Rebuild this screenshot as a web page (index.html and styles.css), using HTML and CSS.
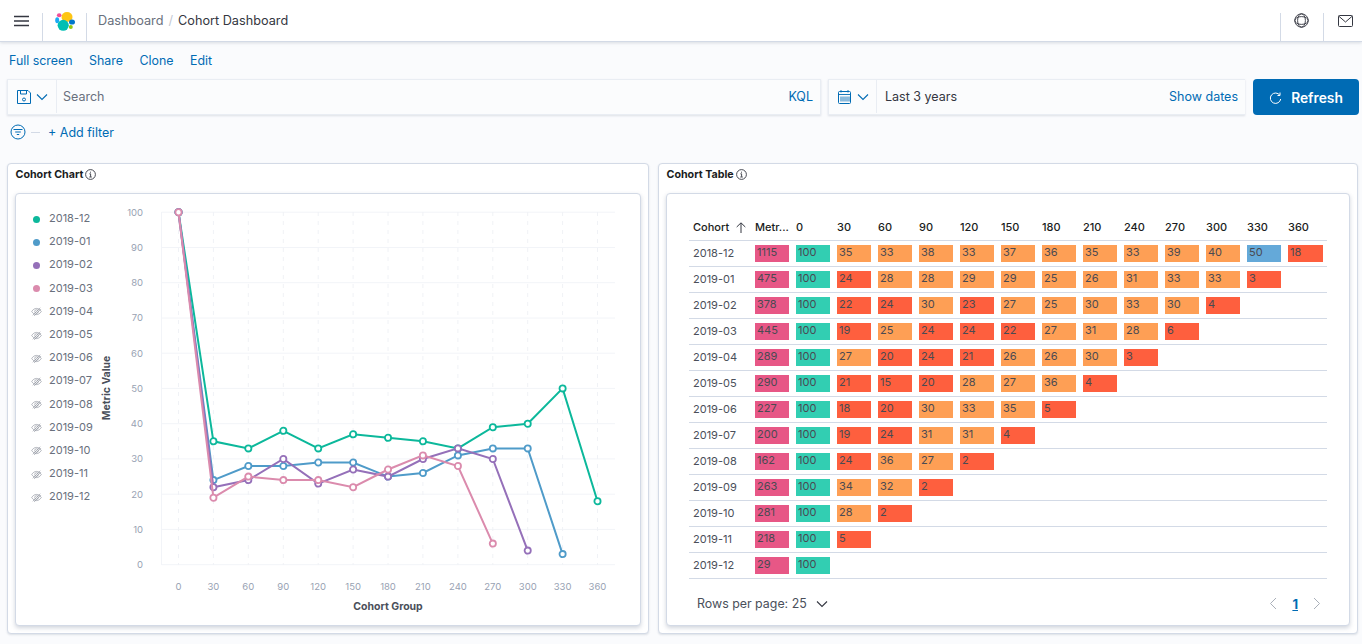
FILE: index.html
```html
<!DOCTYPE html>
<html lang="en">
<head>
<meta charset="utf-8">
<title>Cohort Dashboard</title>
<link rel="stylesheet" href="styles.css">
</head>
<body>
<svg class="defs" width="0" height="0" aria-hidden="true">
  <defs>
    <symbol id="eye-off" viewBox="0 0 16 16">
      <path d="M1 8c2-3 4.300-4.500 7-4.500S13 5 15 8c-2 3-4.300 4.500-7 4.500S3 11 1 8z" fill="none" stroke="#8a8f9a" stroke-width=".9"/>
      <circle cx="8" cy="8" r="2.600" fill="none" stroke="#8a8f9a" stroke-width=".9"/>
      <path d="M2.500 13.500 13.500 2.500M4.500 14.500 14.500 4.500" stroke="#8a8f9a" stroke-width=".9"/>
    </symbol>
    <symbol id="chev" viewBox="0 0 12 8">
      <path d="M1 1.500 6 6.500l5-5" fill="none" stroke="currentColor" stroke-width="1.100"/>
    </symbol>
    <marker id="m-teal" viewBox="0 0 10 10" refX="5" refY="5" markerWidth="10" markerHeight="10" markerUnits="userSpaceOnUse"><circle cx="5" cy="5" r="3.100" fill="#fff" stroke="#0cb89b" stroke-width="1.800"/></marker>
    <marker id="m-blue" viewBox="0 0 10 10" refX="5" refY="5" markerWidth="10" markerHeight="10" markerUnits="userSpaceOnUse"><circle cx="5" cy="5" r="3.100" fill="#fff" stroke="#4f9bc9" stroke-width="1.800"/></marker>
    <marker id="m-purple" viewBox="0 0 10 10" refX="5" refY="5" markerWidth="10" markerHeight="10" markerUnits="userSpaceOnUse"><circle cx="5" cy="5" r="3.100" fill="#fff" stroke="#9570b9" stroke-width="1.800"/></marker>
    <marker id="m-pink" viewBox="0 0 10 10" refX="5" refY="5" markerWidth="10" markerHeight="10" markerUnits="userSpaceOnUse"><circle cx="5" cy="5" r="3.100" fill="#fff" stroke="#db8bad" stroke-width="1.800"/></marker>
  </defs>
</svg>

<header class="topbar">
  <div class="nav-cell menu-cell">
    <svg width="15" height="14" viewBox="0 0 15 14"><path d="M0 2.500h15M0 7h15M0 11.500h15" stroke="#343741" stroke-width="1.500"/></svg>
  </div>
  <div class="nav-cell logo-cell">
    <svg width="24" height="24" viewBox="0 0 24 24">
      <ellipse cx="14" cy="8" rx="5.500" ry="5" fill="#fec514"/>
      <ellipse cx="6.200" cy="6.200" rx="2.300" ry="2" fill="#f04e98"/>
      <ellipse cx="4.200" cy="11.200" rx="2" ry="3" fill="#1ba9f5"/>
      <ellipse cx="19" cy="13" rx="3" ry="2.600" fill="#0077cc"/>
      <ellipse cx="17.800" cy="18" rx="2" ry="1.900" fill="#93c90e"/>
      <ellipse cx="10.200" cy="16.300" rx="5.600" ry="5.500" fill="#00bfb3"/>
    </svg>
  </div>
  <nav class="crumbs"><a class="crumb-link">Dashboard</a><span class="crumb-sep">/</span><span class="crumb-now">Cohort Dashboard</span></nav>
  <div class="nav-cell help-cell">
    <svg width="15" height="15" viewBox="0 0 15 15" fill="none" stroke="#343741" stroke-width=".9"><circle cx="7.500" cy="7.500" r="6.700"/><ellipse cx="7.500" cy="7.500" rx="3.900" ry="6.700"/><ellipse cx="7.500" cy="7.500" rx="6.700" ry="3.900"/></svg>
  </div>
  <div class="nav-cell mail-cell">
    <svg width="15" height="12" viewBox="0 0 15 12" fill="none" stroke="#343741" stroke-width="1"><rect x=".5" y=".5" width="14" height="11" rx="1"/><path d="M.8 1.200 7.500 7l6.700-5.800"/></svg>
  </div>
</header>

<nav class="actions"><a>Full screen</a><a>Share</a><a>Clone</a><a>Edit</a></nav>

<section class="query">
  <div class="search-box">
    <div class="addon save-addon">
      <svg width="14" height="14" viewBox="0 0 14 14" fill="none" stroke="#006bb4" stroke-width="1"><path d="M.5.500h10.500l2.500 2.500v10.500H.5z"/><path d="M3.500.500v3.500h6V.5"/><circle cx="7" cy="9.500" r="1.500"/></svg>
      <svg class="chev-blue" width="12" height="8"><use href="#chev"/></svg>
    </div>
    <span class="placeholder">Search</span>
    <a class="kql">KQL</a>
  </div>
  <div class="date-box">
    <div class="addon date-addon">
      <svg width="13" height="14" viewBox="0 0 13 14" fill="none" stroke="#006bb4" stroke-width="1"><rect x=".5" y="1.500" width="12" height="12" rx="1"/><path d="M.5 4.500h12M3 0v2.500M10 0v2.500M3 6.500v5M5 6.500v5M7 6.500v5M9 6.500v5M11 6.500v5" stroke-width=".9"/></svg>
      <svg class="chev-blue" width="12" height="8"><use href="#chev"/></svg>
    </div>
    <span class="date-text">Last 3 years</span>
    <a class="show-dates">Show dates</a>
  </div>
  <button class="refresh">
    <svg width="13" height="13" viewBox="0 0 13 13" fill="none" stroke="#fff" stroke-width="1"><path d="M10.800 3.200A5.200 5.200 0 1 0 11.700 7"/><path d="M11 .5v3H8.500"/></svg>
    <span>Refresh</span>
  </button>
</section>

<div class="filters">
  <svg width="16" height="16" viewBox="0 0 16 16" fill="none" stroke="#006bb4" stroke-width="1"><circle cx="8" cy="8" r="7"/><path d="M3.500 5.500h9M5.200 8h5.600M6.800 10.500h2.400"/></svg>
  <span class="filter-dash"></span>
  <a class="add-filter">+ Add filter</a>
</div>

<main class="panels">
  <section class="panel">
    <h2 class="panel-title">Cohort Chart<svg class="info" width="11" height="11" viewBox="0 0 11 11" fill="none" stroke="#343741" stroke-width=".9"><circle cx="5.500" cy="5.500" r="4.900"/><path d="M4.400 4.800h1.200v3M4.300 8h2.500M5.500 2.700v1"/></svg></h2>
    <div class="inner chart-inner">
      <ul class="legend">
        <li><i class="dot c-teal"></i>2018-12</li>
        <li><i class="dot c-blue"></i>2019-01</li>
        <li><i class="dot c-purple"></i>2019-02</li>
        <li><i class="dot c-pink"></i>2019-03</li>
        <li><svg class="eye" width="11" height="11"><use href="#eye-off"/></svg>2019-04</li>
        <li><svg class="eye" width="11" height="11"><use href="#eye-off"/></svg>2019-05</li>
        <li><svg class="eye" width="11" height="11"><use href="#eye-off"/></svg>2019-06</li>
        <li><svg class="eye" width="11" height="11"><use href="#eye-off"/></svg>2019-07</li>
        <li><svg class="eye" width="11" height="11"><use href="#eye-off"/></svg>2019-08</li>
        <li><svg class="eye" width="11" height="11"><use href="#eye-off"/></svg>2019-09</li>
        <li><svg class="eye" width="11" height="11"><use href="#eye-off"/></svg>2019-10</li>
        <li><svg class="eye" width="11" height="11"><use href="#eye-off"/></svg>2019-11</li>
        <li><svg class="eye" width="11" height="11"><use href="#eye-off"/></svg>2019-12</li>
      </ul>
      <svg class="plot" width="530" height="420" viewBox="96 200 530 420">
        <g class="grid-h">
          <path d="M161.500 212.200H615M161.500 247.500H615M161.500 282.700H615M161.500 318H615M161.500 353.200H615M161.500 388.400H615M161.500 423.700H615M161.500 458.900H615M161.500 494.200H615M161.500 529.400H615M161.500 564.700H615M161.500 212V565"/>
        </g>
        <g class="grid-v">
          <path d="M178.500 212V565M213.400 212V565M248.300 212V565M283.300 212V565M318.200 212V565M353.100 212V565M388 212V565M422.900 212V565M457.900 212V565M492.800 212V565M527.700 212V565M562.600 212V565M597.500 212V565"/>
        </g>
        <g class="tick-y">
          <text x="143" y="215.500">100</text><text x="143" y="250.500">90</text><text x="143" y="286">80</text><text x="143" y="321">70</text><text x="143" y="356.500">60</text><text x="143" y="391.500">50</text><text x="143" y="427">40</text><text x="143" y="462">30</text><text x="143" y="497.500">20</text><text x="143" y="533">10</text><text x="143" y="568">0</text>
        </g>
        <g class="tick-x">
          <text x="178.500" y="590">0</text><text x="213.400" y="590">30</text><text x="248.300" y="590">60</text><text x="283.300" y="590">90</text><text x="318.200" y="590">120</text><text x="353.100" y="590">150</text><text x="388" y="590">180</text><text x="422.900" y="590">210</text><text x="457.900" y="590">240</text><text x="492.800" y="590">270</text><text x="527.700" y="590">300</text><text x="562.600" y="590">330</text><text x="597.500" y="590">360</text>
        </g>
        <text class="axis-title" x="388" y="610">Cohort Group</text>
        <text class="axis-title" transform="translate(110 388) rotate(-90)">Metric Value</text>
        <polyline class="series s-teal" points="178.500,212.200 213.400,441.300 248.300,448.400 283.300,430.800 318.200,448.400 353.100,434.300 388,437.800 422.900,441.300 457.900,448.400 492.800,427.200 527.700,423.700 562.600,388.400 597.500,501.200"/>
        <polyline class="series s-blue" points="178.500,212.200 213.400,480.100 248.300,466 283.300,466 318.200,462.500 353.100,462.500 388,476.600 422.900,473 457.900,455.400 492.800,448.400 527.700,448.400 562.600,554.100"/>
        <polyline class="series s-purple" points="178.500,212.200 213.400,487.200 248.300,480.100 283.300,459 318.200,483.600 353.100,469.500 388,476.600 422.900,459 457.900,448.400 492.800,459 527.700,550.600"/>
        <polyline class="series s-pink" points="178.500,212.200 213.400,497.700 248.300,476.600 283.300,480.100 318.200,480.100 353.100,487.200 388,469.500 422.900,455.400 457.900,466 492.800,543.600"/>
      </svg>
    </div>
  </section>

  <section class="panel">
    <h2 class="panel-title">Cohort Table<svg class="info" width="11" height="11" viewBox="0 0 11 11" fill="none" stroke="#343741" stroke-width=".9"><circle cx="5.500" cy="5.500" r="4.900"/><path d="M4.400 4.800h1.200v3M4.300 8h2.500M5.500 2.700v1"/></svg></h2>
    <div class="inner table-inner">
      <table class="cohort">
        <thead>
          <tr>
            <th class="col-name">Cohort<svg class="sort" width="10" height="11" viewBox="0 0 10 11" fill="none" stroke="#343741" stroke-width="1"><path d="M5 11V1M.7 5 5 .8 9.300 5"/></svg></th>
            <th class="col-num">Metr...</th>
            <th class="col-num">0</th><th class="col-num">30</th><th class="col-num">60</th><th class="col-num">90</th><th class="col-num">120</th><th class="col-num">150</th><th class="col-num">180</th><th class="col-num">210</th><th class="col-num">240</th><th class="col-num">270</th><th class="col-num">300</th><th class="col-num">330</th><th class="col-num">360</th>
          </tr>
        </thead>
        <tbody>
          <tr><td>2018-12</td><td><div class="cell pink">1115</div></td><td><div class="cell teal">100</div></td><td><div class="cell orange">35</div></td><td><div class="cell orange">33</div></td><td><div class="cell orange">38</div></td><td><div class="cell orange">33</div></td><td><div class="cell orange">37</div></td><td><div class="cell orange">36</div></td><td><div class="cell orange">35</div></td><td><div class="cell orange">33</div></td><td><div class="cell orange">39</div></td><td><div class="cell orange">40</div></td><td><div class="cell blue">50</div></td><td class="last"><div class="cell red">18</div></td></tr>
          <tr><td>2019-01</td><td><div class="cell pink">475</div></td><td><div class="cell teal">100</div></td><td><div class="cell red">24</div></td><td><div class="cell orange">28</div></td><td><div class="cell orange">28</div></td><td><div class="cell orange">29</div></td><td><div class="cell orange">29</div></td><td><div class="cell orange">25</div></td><td><div class="cell orange">26</div></td><td><div class="cell orange">31</div></td><td><div class="cell orange">33</div></td><td><div class="cell orange">33</div></td><td><div class="cell red">3</div></td><td></td></tr>
          <tr><td>2019-02</td><td><div class="cell pink">378</div></td><td><div class="cell teal">100</div></td><td><div class="cell red">22</div></td><td><div class="cell red">24</div></td><td><div class="cell orange">30</div></td><td><div class="cell red">23</div></td><td><div class="cell orange">27</div></td><td><div class="cell orange">25</div></td><td><div class="cell orange">30</div></td><td><div class="cell orange">33</div></td><td><div class="cell orange">30</div></td><td><div class="cell red">4</div></td><td></td><td></td></tr>
          <tr><td>2019-03</td><td><div class="cell pink">445</div></td><td><div class="cell teal">100</div></td><td><div class="cell red">19</div></td><td><div class="cell orange">25</div></td><td><div class="cell red">24</div></td><td><div class="cell red">24</div></td><td><div class="cell red">22</div></td><td><div class="cell orange">27</div></td><td><div class="cell orange">31</div></td><td><div class="cell orange">28</div></td><td><div class="cell red">6</div></td><td></td><td></td><td></td></tr>
          <tr><td>2019-04</td><td><div class="cell pink">289</div></td><td><div class="cell teal">100</div></td><td><div class="cell orange">27</div></td><td><div class="cell red">20</div></td><td><div class="cell red">24</div></td><td><div class="cell red">21</div></td><td><div class="cell orange">26</div></td><td><div class="cell orange">26</div></td><td><div class="cell orange">30</div></td><td><div class="cell red">3</div></td><td></td><td></td><td></td><td></td></tr>
          <tr><td>2019-05</td><td><div class="cell pink">290</div></td><td><div class="cell teal">100</div></td><td><div class="cell red">21</div></td><td><div class="cell red">15</div></td><td><div class="cell red">20</div></td><td><div class="cell orange">28</div></td><td><div class="cell orange">27</div></td><td><div class="cell orange">36</div></td><td><div class="cell red">4</div></td><td></td><td></td><td></td><td></td><td></td></tr>
          <tr><td>2019-06</td><td><div class="cell pink">227</div></td><td><div class="cell teal">100</div></td><td><div class="cell red">18</div></td><td><div class="cell red">20</div></td><td><div class="cell orange">30</div></td><td><div class="cell orange">33</div></td><td><div class="cell orange">35</div></td><td><div class="cell red">5</div></td><td></td><td></td><td></td><td></td><td></td><td></td></tr>
          <tr><td>2019-07</td><td><div class="cell pink">200</div></td><td><div class="cell teal">100</div></td><td><div class="cell red">19</div></td><td><div class="cell red">24</div></td><td><div class="cell orange">31</div></td><td><div class="cell orange">31</div></td><td><div class="cell red">4</div></td><td></td><td></td><td></td><td></td><td></td><td></td><td></td></tr>
          <tr><td>2019-08</td><td><div class="cell pink">162</div></td><td><div class="cell teal">100</div></td><td><div class="cell red">24</div></td><td><div class="cell orange">36</div></td><td><div class="cell orange">27</div></td><td><div class="cell red">2</div></td><td></td><td></td><td></td><td></td><td></td><td></td><td></td><td></td></tr>
          <tr><td>2019-09</td><td><div class="cell pink">263</div></td><td><div class="cell teal">100</div></td><td><div class="cell orange">34</div></td><td><div class="cell orange">32</div></td><td><div class="cell red">2</div></td><td></td><td></td><td></td><td></td><td></td><td></td><td></td><td></td><td></td></tr>
          <tr><td>2019-10</td><td><div class="cell pink">281</div></td><td><div class="cell teal">100</div></td><td><div class="cell orange">28</div></td><td><div class="cell red">2</div></td><td></td><td></td><td></td><td></td><td></td><td></td><td></td><td></td><td></td><td></td></tr>
          <tr><td>2019-11</td><td><div class="cell pink">218</div></td><td><div class="cell teal">100</div></td><td><div class="cell red">5</div></td><td></td><td></td><td></td><td></td><td></td><td></td><td></td><td></td><td></td><td></td><td></td></tr>
          <tr><td>2019-12</td><td><div class="cell pink">29</div></td><td><div class="cell teal">100</div></td><td></td><td></td><td></td><td></td><td></td><td></td><td></td><td></td><td></td><td></td><td></td><td></td></tr>
        </tbody>
      </table>
      <div class="pager">
        <span class="rows">Rows per page: 25<svg class="rows-chev" width="12" height="8"><use href="#chev"/></svg></span>
        <span class="pages">
          <svg width="8" height="13" viewBox="0 0 8 13" fill="none" stroke="#a9afb9" stroke-width="1"><path d="M7 1 1.500 6.500 7 12"/></svg>
          <a class="page-now">1</a>
          <svg width="8" height="13" viewBox="0 0 8 13" fill="none" stroke="#a9afb9" stroke-width="1"><path d="M1 1l5.500 5.500L1 12"/></svg>
        </span>
      </div>
    </div>
  </section>
</main>
</body>
</html>
```
FILE: styles.css
```css
* { box-sizing: border-box; }
html, body { margin: 0; padding: 0; }
body {
  width: 1362px;
  height: 644px;
  overflow: hidden;
  background: #fafbfd;
  font-family: Inter, "Noto Sans", sans-serif;
  font-size: 12.500px;
  color: #343741;
}
.defs { position: absolute; }

.topbar {
  display: flex;
  height: 42px;
  background: #fff;
  border-bottom: 1px solid #d3dae6;
  box-shadow: 0 1px 3px rgba(152, 162, 179, .35);
  position: relative;
}
.nav-cell {
  display: flex;
  align-items: center;
  justify-content: center;
  position: relative;
}
.menu-cell { width: 43px; padding-right: 1px; padding-top: 1px; }
.logo-cell { width: 44px; }
.menu-cell::after, .logo-cell::after, .help-cell::before, .mail-cell::before {
  content: "";
  position: absolute;
  top: 13px;
  bottom: 0;
  width: 1px;
  background: #d3dae6;
}
.menu-cell::after, .logo-cell::after { right: 0; }
.help-cell::before, .mail-cell::before { left: 0; }
.crumbs { flex: 1; display: flex; align-items: center; padding-left: 11px; font-size: 12.700px; }
.crumb-link { color: #69707d; }
.crumb-sep { color: #c2c8d2; margin: 0 5px; }
.crumb-now { color: #343741; }
.help-cell { width: 43px; padding-right: 1px; }
.mail-cell { width: 39px; padding-left: 5px; }

.actions { display: flex; gap: 16.500px; height: 37px; padding: 11px 9px 0; font-size: 12.400px; line-height: 16px; }
.actions a { color: #006bb4; }

.query { display: flex; height: 36px; padding-left: 7px; }
.search-box, .date-box {
  display: flex;
  align-items: center;
  height: 36px;
  padding-bottom: 1px;
  background: #fbfcfd;
  border: 1px solid #e9edf3;
  box-shadow: 0 1px 2px rgba(152, 162, 179, .3);
}
.search-box { width: 814px; margin-right: 7px; }
.date-box { width: 417px; margin-right: 8px; border-right: 0; }
.addon {
  display: flex;
  align-items: center;
  height: 100%;
  border-right: 1px solid #e9edf3;
}
.save-addon { width: 49px; padding-left: 9px; gap: 5px; }
.date-addon { width: 48px; padding-left: 9px; gap: 6px; }
.chev-blue { color: #006bb4; }
.placeholder { flex: 1; padding-left: 6px; color: #69707d; }
.kql { color: #006bb4; padding-right: 7px; }
.date-text { flex: 1; padding-left: 8px; color: #343741; }
.show-dates { color: #006bb4; padding-right: 7px; }
.refresh {
  display: flex;
  align-items: center;
  justify-content: center;
  gap: 9px;
  width: 106px;
  height: 36px;
  padding: 2px 0 0;
  border: 0;
  border-radius: 4px;
  background: #006bb4;
  color: #fff;
  font: 600 13.800px Inter, sans-serif;
}

.filters { display: flex; align-items: center; height: 34px; padding-left: 10px; }
.filter-dash { width: 9px; height: 1px; margin: 0 8px 0 5px; background: #d3dae6; }
.add-filter { color: #006bb4; }

.panels { display: grid; grid-template-columns: 642px 700px; gap: 9px; padding: 14px 0 0 7px; }
.panel {
  height: 471px;
  padding: 0 7px 7px;
  background: #fff;
  border: 1px solid #d3dae6;
  border-radius: 4px;
  box-shadow: 0 1px 2px rgba(152, 162, 179, .3);
  display: flex;
  flex-direction: column;
}
.panel-title {
  display: flex;
  flex: none;
  align-items: center;
  height: 29px;
  margin: 0;
  padding: 0 0 9px .5px;
  font-size: 10.700px;
  font-weight: 700;
  color: #1a1c21;
}
.info { margin-left: 2px; }
.inner {
  flex: 1;
  min-height: 0;
  background: #fff;
  border: 1px solid #d3dae6;
  border-radius: 4px;
  box-shadow: 0 2px 4px rgba(152, 162, 179, .45);
}
.chart-inner { display: flex; padding-top: 6px; }
.legend {
  width: 80px;
  margin: 0;
  padding: 6.500px 0 0 15px;
  list-style: none;
  font-size: 11px;
  color: #69707d;
}
.legend li { display: flex; align-items: center; height: 23.200px; gap: 7px; }
.dot { width: 7px; height: 7px; margin: 2px 2px 0; border-radius: 50%; }
.eye { margin-top: 2px; flex: none; }
.c-teal { background: #0cb89b; }
.c-blue { background: #4f9bc9; }
.c-purple { background: #9570b9; }
.c-pink { background: #db8bad; }

.grid-h path { stroke: #f2f4f8; stroke-width: 1; fill: none; }
.grid-v path { stroke: #f0f2f6; stroke-width: 1; stroke-dasharray: 4 5; fill: none; }
.tick-y text { font-size: 9.500px; fill: #98a2b3; text-anchor: end; }
.tick-x text { font-size: 9.500px; fill: #98a2b3; text-anchor: middle; }
.axis-title { font-size: 10.500px; font-weight: 700; fill: #4a4f5a; text-anchor: middle; }
.series { fill: none; stroke-width: 2; }
.s-teal { stroke: #0cb89b; marker-start: url(#m-teal); marker-mid: url(#m-teal); marker-end: url(#m-teal); }
.s-blue { stroke: #4f9bc9; marker-start: url(#m-blue); marker-mid: url(#m-blue); marker-end: url(#m-blue); }
.s-purple { stroke: #9570b9; marker-start: url(#m-purple); marker-mid: url(#m-purple); marker-end: url(#m-purple); }
.s-pink { stroke: #db8bad; marker-start: url(#m-pink); marker-mid: url(#m-pink); marker-end: url(#m-pink); }

.table-inner { padding: 0 22px; display: flex; flex-direction: column; }
.cohort {
  flex: none;
  width: 638px;
  margin-top: 22px;
  table-layout: fixed;
  border-collapse: collapse;
  font-size: 11px;
}
.cohort tr { height: 26px; border-bottom: 1px solid #d3dae6; }
.cohort thead tr { height: 24px; }
.cohort th {
  padding: 0 0 1px 2px;
  text-align: left;
  font-weight: 500;
  color: #1a1c21;
  white-space: nowrap;
}
.col-name { width: 64px; padding-left: 4px !important; }
.col-num { width: 41px; }
.sort { margin-left: 7px; vertical-align: -2px; }
.cohort td { padding: 0 5px 0 2px; color: #4a4f5a; vertical-align: middle; }
.cohort td:first-child { padding: 0 0 1px 4px; }
.cohort td.last { padding-right: 4px; }
.cell { height: 17px; padding-left: 2px; line-height: 14px; color: #4a4a52; }
.pink { background: #e75786; }
.teal { background: #32ceb2; }
.orange { background: #fe9f55; }
.red { background: #fe5f3e; }
.blue { background: #64a9d9; }

.pager {
  display: flex;
  flex: none;
  justify-content: space-between;
  align-items: center;
  height: 46px;
  padding: 4px 6px 0 8px;
  width: 638px;
}
.rows { display: flex; align-items: center; font-size: 12.400px; color: #4a4f5a; }
.rows-chev { margin-left: 9px; color: #343741; }
.pages { display: flex; align-items: center; gap: 15px; }
.page-now { color: #006bb4; font-size: 13px; font-weight: 700; text-decoration: underline; }
```
